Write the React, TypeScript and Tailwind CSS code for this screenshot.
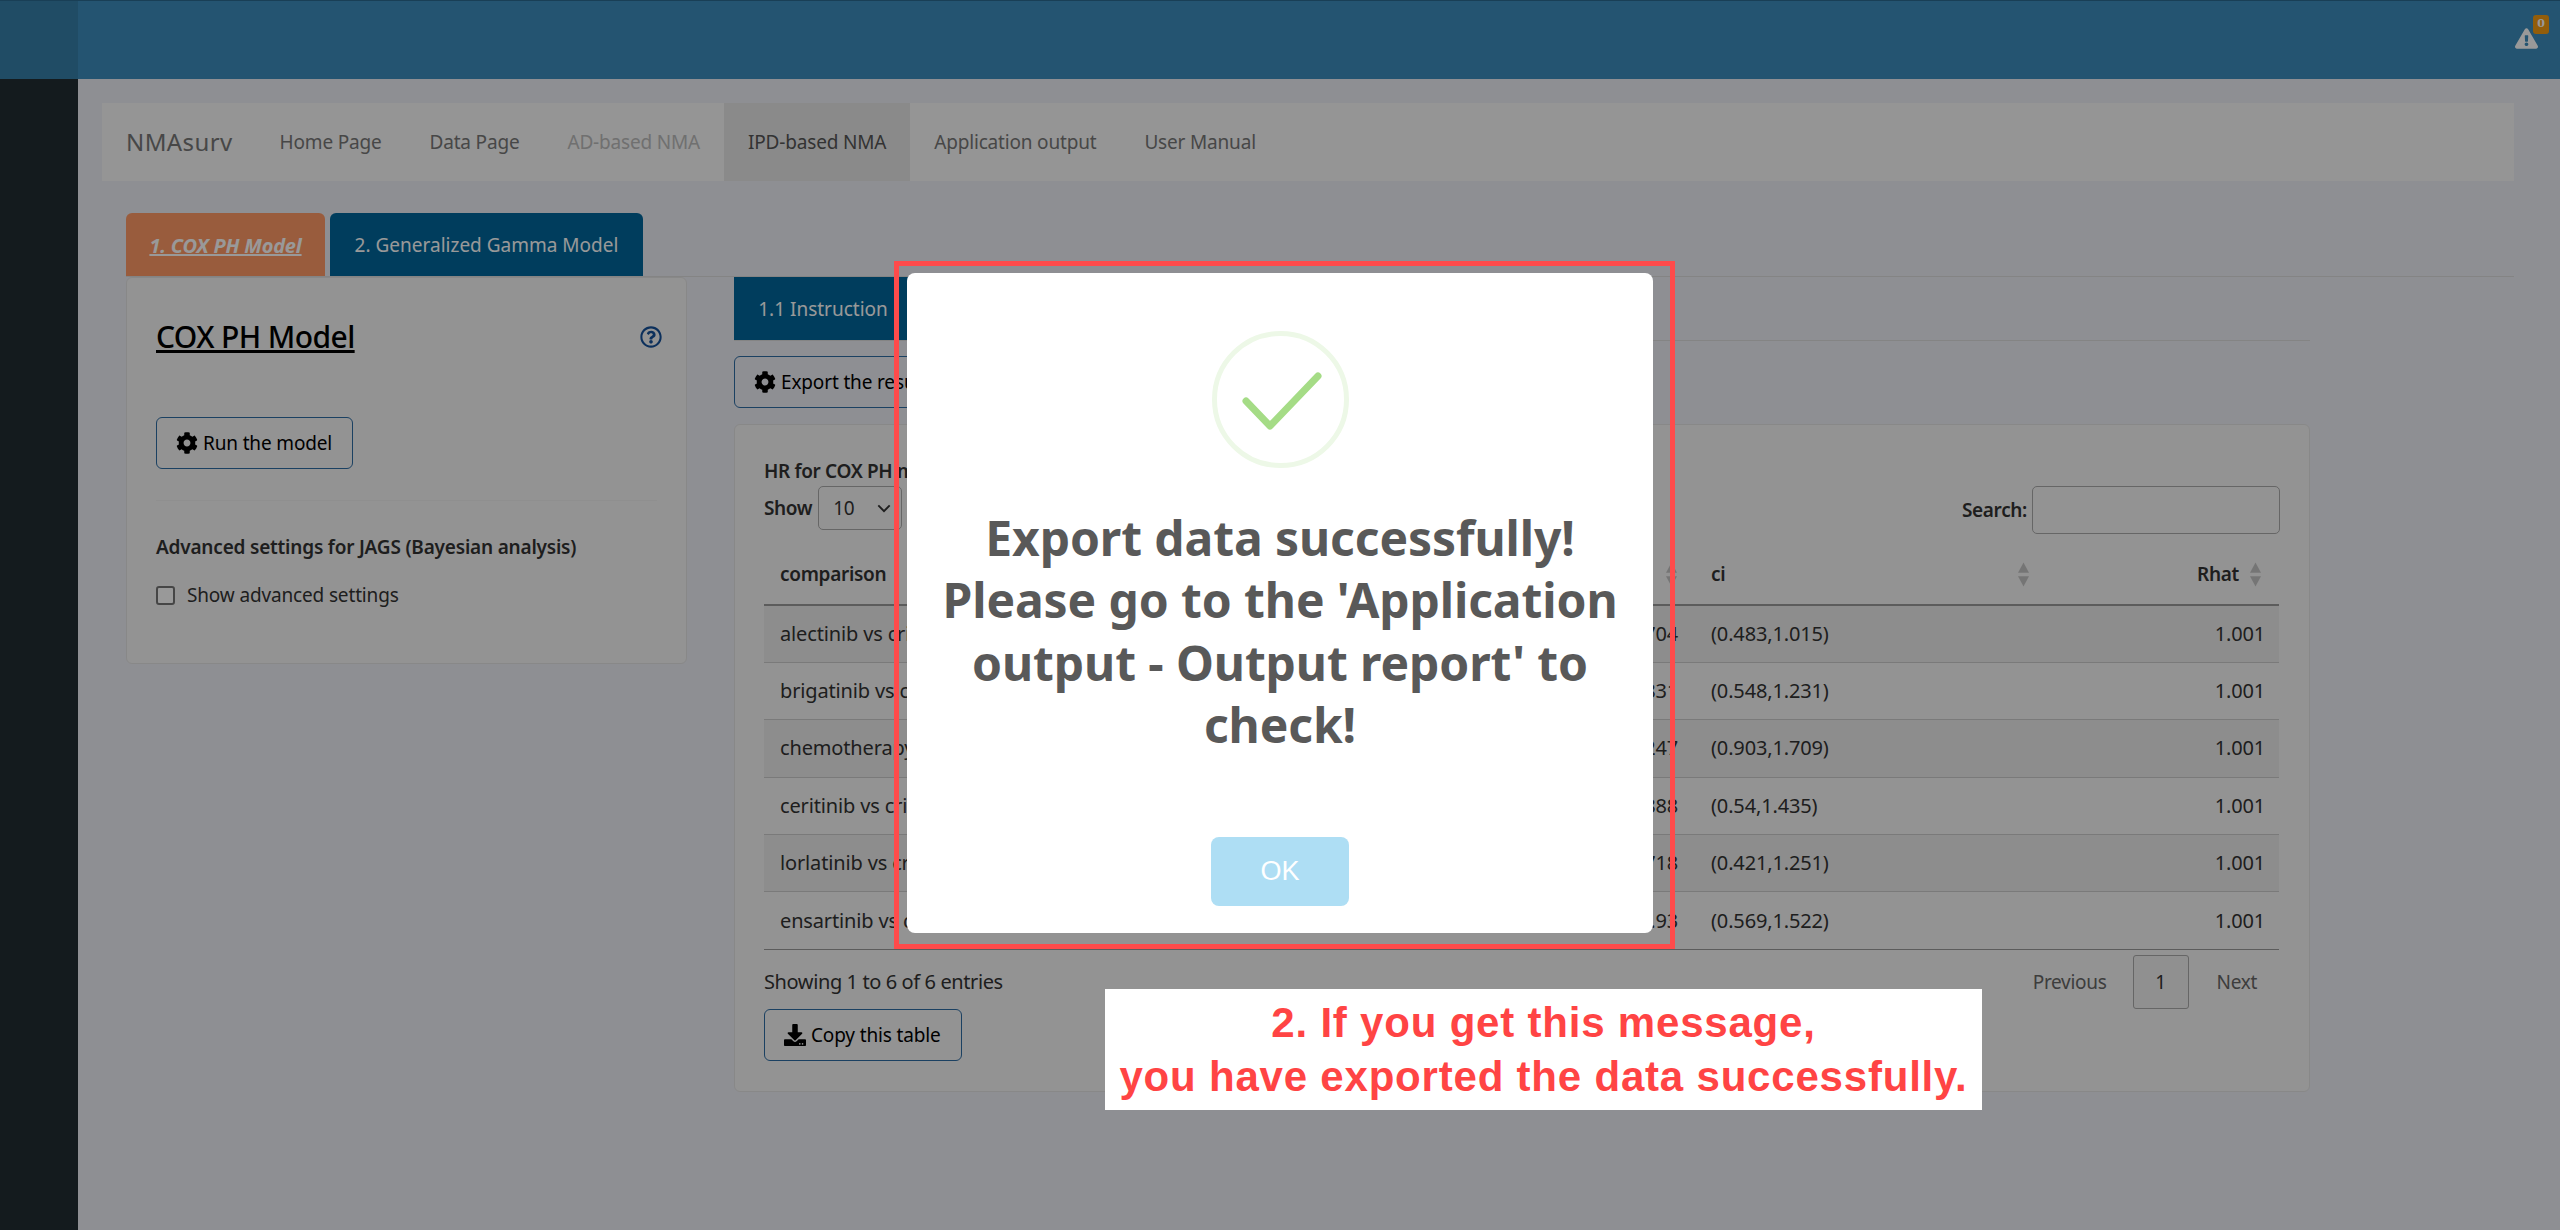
import { FaCog, FaDownload, FaExclamationTriangle, FaRegQuestionCircle } from 'react-icons/fa'

const rows = [
  { name: 'alectinib vs crizotinib', hr: '0.704', ci: '(0.483,1.015)' },
  { name: 'brigatinib vs crizotinib', hr: '0.831', ci: '(0.548,1.231)' },
  { name: 'chemotherapy vs crizotinib', hr: '1.247', ci: '(0.903,1.709)' },
  { name: 'ceritinib vs crizotinib', hr: '0.888', ci: '(0.54,1.435)' },
  { name: 'lorlatinib vs crizotinib', hr: '0.718', ci: '(0.421,1.251)' },
  { name: 'ensartinib vs crizotinib', hr: '0.93', ci: '(0.569,1.522)' },
]

const navItems = ['Home Page', 'Data Page', 'AD-based NMA', 'IPD-based NMA', 'Application output', 'User Manual']

function SortArrows({ className }: { className: string }) {
  return (
    <svg viewBox="0 0 12 26" className={`absolute w-[11px] h-[25px] ${className}`}>
      <path d="M6 0L12 11H0Z" fill="#c4c4c4" />
      <path d="M6 26L12 15H0Z" fill="#c4c4c4" />
    </svg>
  )
}

function OutlineButton({ icon, label, className }: { icon: React.ReactNode; label: string; className: string }) {
  return (
    <button className={`flex items-center gap-[5px] h-[52px] rounded-[6px] border border-[#2e6da4] text-[19px] tracking-[-0.15px] text-black ${className}`}>
      {icon}
      {label}
    </button>
  )
}

export default function App() {
  return (
    <div className="relative min-h-screen overflow-hidden bg-[#edeef5] font-['Noto_Sans',sans-serif] text-[#333]">
      {/* Header */}
      <header className="flex h-[79px] bg-[#3c8dbc] border-t border-[#2a6a90]">
        <div className="w-[78px] bg-[#367fa9]" />
        <div className="relative flex-1">
          <FaExclamationTriangle className="absolute left-[2437px] top-[27px] w-[23px] h-[21px] text-white" />
          <span className="absolute left-[2455px] top-[14px] flex w-[16px] h-[19px] items-center justify-center rounded-[3px] bg-[#f39c12] font-['DejaVu_Serif',serif] text-[11px] font-bold text-white">
            0
          </span>
        </div>
      </header>

      <div className="flex min-h-[1151px]">
        {/* Sidebar */}
        <aside className="w-[78px] shrink-0 bg-[#222d32]" />

        {/* Main content */}
        <main className="pl-[24px] pt-[24px]">
          <nav className="flex w-[2412px] h-[78px] items-center bg-[#f8f8f8] text-[19px] tracking-[-0.18px] text-[#777]">
            <span className="ml-[24px] mr-[23px] text-[24px] tracking-[0.4px] text-[#777]">NMAsurv</span>
            {navItems.map((item) => (
              <span
                key={item}
                className={`flex h-full items-center px-[24px] ${
                  item === 'IPD-based NMA' ? 'bg-[#e7e7e7] text-[#555]' : item === 'AD-based NMA' ? 'text-[#bbb]' : ''
                }`}
              >
                {item}
              </span>
            ))}
          </nav>

          {/* Top tabs */}
          <div className="ml-[24px] mt-[32px] w-[2388px]">
            <div className="flex h-[64px] gap-[5px] border-b border-[#ddd]">
              <div className="flex w-[199px] items-center justify-center rounded-t-[6px] bg-[#ff9a66] pt-[2px] text-[20px] font-bold italic tracking-[-0.2px] text-white underline">
                1. COX PH Model
              </div>
              <div className="flex w-[313px] items-center justify-center rounded-t-[6px] bg-[#00669c] pt-[2px] text-[19px] text-white">
                2. Generalized Gamma Model
              </div>
            </div>

            <div className="flex gap-[47px]">
              {/* Left panel */}
              <section className="w-[561px] h-[387px] rounded-[6px] border border-[#e3e3e3] bg-[#f5f5f5] px-[29px] pt-[37px]">
                <div className="flex h-[42px] items-center justify-between">
                  <h2 className="text-[30px] font-medium tracking-[-0.6px] text-black underline">COX PH Model</h2>
                  <FaRegQuestionCircle className="mr-[-5px] mt-[2px] w-[22px] h-[22px] text-[#14509a]" />
                </div>
                <OutlineButton
                  icon={<FaCog className="w-[22px] h-[22px]" />}
                  label="Run the model"
                  className="mt-[60px] w-[197px] pl-[19px]"
                />
                <hr className="mt-[31px] border-[#eee]" />
                <p className="mt-[32px] text-[19px] leading-[28px] font-semibold tracking-[-0.2px] whitespace-nowrap">
                  Advanced settings for JAGS (Bayesian analysis)
                </p>
                <label className="mt-[25px] flex h-[19px] items-center gap-[12px] text-[19px] tracking-[-0.15px] text-[#333]">
                  <span className="w-[19px] h-[19px] rounded-[3px] border-2 border-[#767676] bg-white" />
                  Show advanced settings
                </label>
              </section>

              {/* Right column */}
              <section className="w-[1576px]">
                <div className="h-[64px] border-b border-[#ddd]">
                  <div className="flex h-[63px] w-[178px] items-center justify-center bg-[#00669c] pt-[2px] text-[19px] text-white">
                    1.1 Instruction
                  </div>
                </div>
                <OutlineButton
                  icon={<FaCog className="w-[22px] h-[22px]" />}
                  label="Export the results"
                  className="mt-[15px] w-[290px] pl-[19px]"
                />
                <div className="mt-[16px] w-[1576px] h-[668px] rounded-[6px] border border-[#e3e3e3] bg-[#f5f5f5] px-[29px] pt-[31px]">
                  <p className="h-[30px] text-[19px] leading-[30px] font-semibold tracking-[-0.35px]">HR for COX PH model</p>
                  <div className="flex h-[48px] items-start justify-between">
                    <div className="flex items-center gap-[6px] text-[19px] font-semibold tracking-[-0.35px]">
                      Show
                      <div className="relative flex h-[44px] w-[84px] items-center rounded-[5px] border border-[#aaa] pl-[14px] text-[19px] font-normal">
                        10
                        <svg viewBox="0 0 16 10" className="absolute right-[10px] top-[17px] w-[14px] h-[9px]" fill="none" stroke="#333" strokeWidth="2.2">
                          <path d="M1.5 1.5L8 8L14.5 1.5" />
                        </svg>
                      </div>
                    </div>
                    <div className="flex items-center gap-[5px] text-[19px] font-semibold tracking-[-0.35px]">
                      Search:
                      <div className="h-[48px] w-[248px] rounded-[5px] border border-[#aaa] bg-[#f5f5f5]" />
                    </div>
                  </div>

                  <table className="mt-[10px] w-[1515px] table-fixed border-collapse text-[20px] tracking-[-0.15px]">
                    <colgroup>
                      <col className="w-[335px]" />
                      <col className="w-[300px]" />
                      <col className="w-[295px]" />
                      <col className="w-[353px]" />
                      <col className="w-[232px]" />
                    </colgroup>
                    <thead>
                      <tr className="h-[61px] border-b-2 border-[#999] text-[19px] tracking-[-0.3px]">
                        <th className="relative pl-[16px] text-left font-semibold">comparison<SortArrows className="right-[17px] top-[18px]" /></th>
                        <th />
                        <th className="relative pr-[42px] text-right font-semibold text-[#2a7ab8]">hr<SortArrows className="right-[17px] top-[18px]" /></th>
                        <th className="relative pl-[17px] text-left font-semibold">ci<SortArrows className="right-[18px] top-[18px]" /></th>
                        <th className="relative pr-[40px] text-right font-semibold">Rhat<SortArrows className="right-[18px] top-[18px]" /></th>
                      </tr>
                    </thead>
                    <tbody>
                      {rows.map((row, i) => (
                        <tr key={row.name} className={`h-[57.4px] border-b ${i === 5 ? 'border-[#999]' : 'border-[#ccc]'} ${i % 2 === 0 ? 'bg-[#ebebeb]' : ''}`}>
                          <td className="pl-[16px] whitespace-nowrap">{row.name}</td>
                          <td />
                          <td className="pr-[16px] text-right">{row.hr}</td>
                          <td className="pl-[17px]">{row.ci}</td>
                          <td className="pr-[14px] text-right">1.001</td>
                        </tr>
                      ))}
                    </tbody>
                  </table>

                  <div className="mt-[5px] flex h-[54px] items-center justify-between">
                    <span className="text-[20px] tracking-[-0.4px]">Showing 1 to 6 of 6 entries</span>
                    <div className="flex items-center text-[19px] tracking-[-0.3px]">
                      <span className="mr-[26px] text-[#666]">Previous</span>
                      <span className="flex h-[54px] w-[56px] items-center justify-center rounded-[3px] border border-[#aaa] bg-[#f0f0f0]">1</span>
                      <span className="ml-[28px] mr-[23px] text-[#666]">Next</span>
                    </div>
                  </div>
                  <OutlineButton
                    icon={<FaDownload className="w-[22px] h-[22px]" />}
                    label="Copy this table"
                    className="w-[198px] pl-[19px]"
                  />
                </div>
              </section>
            </div>
          </div>
        </main>
      </div>

      {/* Dialog */}
      <div className="fixed inset-0 flex justify-center bg-black/40 pt-[273px]">
        <div className="flex w-[746px] h-[660px] flex-col items-center rounded-[8px] bg-white pt-[58px]">
          <svg viewBox="0 0 137 137" className="w-[137px] h-[137px]" fill="none">
            <circle cx="68.5" cy="68.5" r="66" stroke="#edf8e7" strokeWidth="5" />
            <path d="M34 70L58 95L106 45" stroke="#a5dc86" strokeWidth="7" strokeLinecap="round" strokeLinejoin="round" />
          </svg>
          <h2 className="mt-[39px] whitespace-nowrap text-center text-[48px] leading-[62.4px] font-bold tracking-[-0.1px] text-[#595959]">
            Export data successfully!
            <br />
            Please go to the 'Application
            <br />
            output - Output report' to
            <br />
            check!
          </h2>
          <button className="mt-[80px] w-[138px] h-[69px] rounded-[8px] bg-[#aedef4] font-['Liberation_Sans',sans-serif] text-[27px] text-white">
            OK
          </button>
        </div>
      </div>

      {/* Screenshot annotations */}
      <div className="absolute left-[894px] top-[261px] w-[781px] h-[688px] border-[5px] border-[#ff4b4b]" />
      <div className="absolute left-[1105px] top-[989px] flex w-[877px] h-[121px] flex-col items-center justify-center bg-white font-['Liberation_Sans',sans-serif] text-[42px] leading-[54px] font-bold tracking-[0.8px] text-[#ff4444]">
        <span>2. If you get this message,</span>
        <span>you have exported the data successfully.</span>
      </div>
    </div>
  )
}
